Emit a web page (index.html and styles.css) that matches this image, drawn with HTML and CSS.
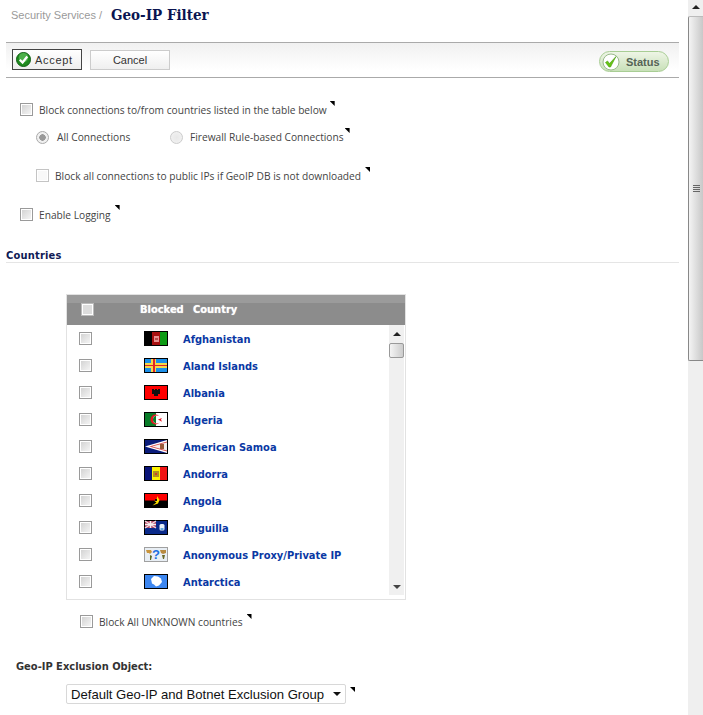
FILE: index.html
```html
<!DOCTYPE html>
<html lang="en">
<head>
<meta charset="utf-8">
<title>Geo-IP Filter</title>
<link rel="stylesheet" href="styles.css">
</head>
<body>
<div class="page">
  <main class="content">
    <header class="title"><span class="crumb">Security Services /</span><h1>Geo-IP Filter</h1></header>
    <div class="toolbar">
      <button class="btn accept" type="button">
        <svg class="accept-ic" width="15" height="15" viewBox="0 0 16 16"><circle cx="8" cy="8" r="7.500" fill="#1f8a1f" stroke="#0d5c12"/><circle cx="8" cy="6" r="5" fill="#4cb04a"/><path d="M4 8.200l3 3 5-6.400" fill="none" stroke="#fff" stroke-width="2.400"/></svg>
        Accept</button>
      <button class="btn cancel" type="button">Cancel</button>
      <div class="status">
        <svg width="18" height="18" viewBox="0 0 18 18"><circle cx="9" cy="9" r="8" fill="#fff" stroke="#9ab98c"/><path d="M3.500 9.500l2-1.500 2 2.500L14 3.500l-5.500 10.500h-1.500z" fill="#66c414" stroke="#4a9a10" stroke-width=".6"/></svg>
        <span>Status</span>
      </div>
    </div>

    <div class="opt opt-a"><input class="cb" type="checkbox"><label>Block connections to/from countries listed in the table below</label><i class="tip tip-a"></i></div>
    <div class="opt opt-b">
      <input class="radio on" type="radio" name="c"><label class="lab-all">All Connections</label>
      <input class="radio off" type="radio" name="c"><label>Firewall Rule-based Connections</label><i class="tip tip-b"></i>
    </div>
    <div class="opt opt-c"><input class="cb pale" type="checkbox"><label>Block all connections to public IPs if GeoIP DB is not downloaded</label><i class="tip tip-c"></i></div>
    <div class="opt opt-d"><input class="cb" type="checkbox"><label>Enable Logging</label><i class="tip tip-d"></i></div>

    <h2 class="section">Countries</h2>

    <section class="table">
      <div class="thead"><input class="cb head-cb" type="checkbox"><span class="th-blocked">Blocked</span><span class="th-country">Country</span></div>
      <div class="tbody">
        <div class="rows">
          <div class="row"><input class="cb" type="checkbox"><svg class="flag" viewBox="0 0 24 15" shape-rendering="crispEdges"><rect width="24" height="15" fill="#000"/><rect x="8" y="1" width="8" height="13" fill="#a81010"/><rect x="16" y="1" width="7" height="13" fill="#0d9b14"/><rect x="10" y="5" width="5" height="6" fill="#e89090"/><rect x="11" y="7" width="3" height="2" fill="#b84a4a"/></svg><a>Afghanistan</a></div>
          <div class="row"><input class="cb" type="checkbox"><svg class="flag" viewBox="0 0 24 15" shape-rendering="crispEdges"><rect width="24" height="15" fill="#000"/><rect x="1" y="1" width="22" height="13" fill="#1c8fe8"/><rect x="7" y="1" width="5" height="13" fill="#f5d848"/><rect x="1" y="5" width="22" height="5" fill="#f5d848"/><rect x="9" y="1" width="2" height="13" fill="#e0242a"/><rect x="1" y="7" width="22" height="1" fill="#e0242a"/></svg><a>Aland Islands</a></div>
          <div class="row"><input class="cb" type="checkbox"><svg class="flag" viewBox="0 0 24 15" shape-rendering="crispEdges"><rect width="24" height="15" fill="#000"/><rect x="1" y="1" width="22" height="13" fill="#ff0000"/><path d="M8 4h2v1h1V4h2v1h1V4h2v5h-2v2h-4V9H8z" fill="#111"/></svg><a>Albania</a></div>
          <div class="row"><input class="cb" type="checkbox"><svg class="flag" viewBox="0 0 24 15"><rect width="24" height="15" fill="#000"/><rect x="1" y="1" width="11" height="13" fill="#087c28"/><rect x="12" y="1" width="11" height="13" fill="#fff"/><circle cx="11.500" cy="7.500" r="5" fill="#e8131f"/><circle cx="13" cy="7.500" r="4" fill="#fff"/><path d="M12 3.630A4 4 0 0 0 12 11.370z" fill="#087c28"/><path d="M14 7.500l4-1.600-1 1.600 1 2.200z" fill="#e8131f"/></svg><a>Algeria</a></div>
          <div class="row"><input class="cb" type="checkbox"><svg class="flag" viewBox="0 0 24 15"><rect width="24" height="15" fill="#000"/><rect x="1" y="1" width="22" height="13" fill="#0a1c7a"/><path d="M1 7.500L23 1v13z" fill="#fff"/><path d="M5 7.500L23 2.400v10.200z" fill="#d85050"/><path d="M8 7.500L23 3.500v8z" fill="#f4eeee"/><rect x="16" y="5" width="4" height="5" fill="#9a5a3a"/></svg><a>American Samoa</a></div>
          <div class="row"><input class="cb" type="checkbox"><svg class="flag" viewBox="0 0 24 15" shape-rendering="crispEdges"><rect width="24" height="15" fill="#000"/><rect x="1" y="1" width="7" height="13" fill="#0a1478"/><rect x="8" y="1" width="8" height="13" fill="#fff200"/><rect x="16" y="1" width="7" height="13" fill="#f01414"/><rect x="9" y="5" width="6" height="6" fill="#b09020"/><rect x="11" y="7" width="2" height="2" fill="#d04020"/></svg><a>Andorra</a></div>
          <div class="row"><input class="cb" type="checkbox"><svg class="flag" viewBox="0 0 24 15"><rect width="24" height="15" fill="#000"/><rect x="1" y="1" width="22" height="6.500" fill="#ff0000"/><path d="M13 3l2.500 4-1.500 3.500-5.500 2 2.500-2 1.500-1-2-1.500 1.500-2 1-.5z" fill="#ffe000"/><rect x="11" y="6" width="2" height="2" fill="#111"/></svg><a>Angola</a></div>
          <div class="row"><input class="cb" type="checkbox"><svg class="flag" viewBox="0 0 24 15"><rect width="24" height="15" fill="#000"/><rect x="1" y="1" width="22" height="13" fill="#0a2a8a"/><rect x="1" y="1" width="11" height="7" fill="#b0435f"/><path d="M1 1l11 7M12 1L1 8" stroke="#f0e0e4" stroke-width="1.400"/><path d="M6.500 1v7M1 4.500h11" stroke="#f8f0f0" stroke-width="1.600"/><rect x="15.500" y="4" width="5" height="6.500" rx="1.500" fill="#e8f2fa"/><rect x="16.500" y="8" width="3" height="2" fill="#62a8e0"/></svg><a>Anguilla</a></div>
          <div class="row"><input class="cb" type="checkbox"><svg class="flag" viewBox="0 0 24 15"><rect width="24" height="15" fill="#a0a0a0"/><rect x="1" y="1" width="22" height="13" fill="#e8eef4"/><path d="M2 3h5l1 2-2 2-1-1-2 0z" fill="#c8943c"/><path d="M6 8l2 1-1 4-1 0z" fill="#5a6a24"/><path d="M16 3h6v3l-3 1-2-1z" fill="#b88a40"/><path d="M18 8h3l-1 4h-1z" fill="#6a6a2a"/><text x="12" y="12" text-anchor="middle" class="q">?</text></svg><a>Anonymous Proxy/Private IP</a></div>
          <div class="row"><input class="cb" type="checkbox"><svg class="flag" viewBox="0 0 24 15"><rect width="24" height="15" fill="#000"/><rect x="1" y="1" width="22" height="13" fill="#3c86f0"/><path d="M7 5l3-3 4 .5 3 2 1 3.500-3 3.500-3 1-2-2-2-1z" fill="#fff"/></svg><a>Antarctica</a></div>
        </div>
        <div class="inner-sb">
          <span class="arrow up"></span>
          <span class="inner-thumb"></span>
          <span class="inner-space"></span>
          <span class="arrow down"></span>
        </div>
      </div>
    </section>

    <div class="opt opt-e"><input class="cb" type="checkbox"><label>Block All UNKNOWN countries</label><i class="tip tip-e"></i></div>

    <h3 class="excl">Geo-IP Exclusion Object:</h3>
    <div class="select-row">
      <div class="select"><span>Default Geo-IP and Botnet Exclusion Group</span><b class="caret"></b></div><i class="tip tip-f"></i>
    </div>
  </main>
  <aside class="sb">
    <span class="sb-up"><span class="arrow up"></span></span>
    <span class="sb-thumb"><span class="grip"></span></span>
  </aside>
</div>
</body>
</html>
```
FILE: styles.css
```css
html, body { margin: 0; padding: 0; height: 715px; overflow: hidden; background: #fff; }
body { font-family: "Liberation Sans", sans-serif; font-size: 11px; color: #333; }
.page { display: flex; width: 703px; height: 715px; }
.content { width: 688px; height: 715px; overflow: hidden; padding-left: 6px; padding-right: 9px; box-sizing: border-box; flex: none; }

.title { display: flex; align-items: center; height: 30px; padding-left: 5px; }
.crumb { color: #9a9a9a; font-size: 11px; width: 100px; flex: none; }
h1 { margin: 0; font-family: "DejaVu Serif Condensed", "DejaVu Serif", serif; font-size: 15px; font-weight: bold; color: #0a1450; white-space: nowrap; }

.toolbar { margin-top: 12px; height: 34px; border-top: 1px solid #aaa; border-bottom: 1px solid #aaa; background: linear-gradient(#f1f1f1, #fff 80%); display: flex; align-items: flex-start; padding-left: 6px; }
.btn { font-family: "Liberation Sans", sans-serif; font-size: 11px; color: #333; padding: 0; box-sizing: border-box; }
.accept { display: flex; align-items: center; gap: 4px; width: 70px; height: 21px; margin-top: 6px; border: 1px solid #444; background: linear-gradient(#fff, #eee); padding-left: 3px; letter-spacing: .7px; }
.cancel { width: 80px; height: 20px; margin: 7px 0 0 8px; border: 1px solid #ccc; background: linear-gradient(#fff, #efefef); }
.status { margin: 8px 10px 0 auto; width: 70px; height: 21px; box-sizing: border-box; border: 1px solid #a8cd94; border-radius: 11px; background: linear-gradient(#eef5e6, #c8e0b8); display: flex; align-items: center; gap: 6px; padding-left: 2px; font: bold 11px "Liberation Sans", sans-serif; color: #556355; }
.status svg { flex: none; }

.opt { display: flex; align-items: center; height: 16px; white-space: nowrap; }
.opt label { font-family: "Open Sans", "Liberation Sans", sans-serif; font-size: 10.2px; color: #444; }
.opt-a { margin-top: 24px; padding-left: 14px; }
.opt-b { margin-top: 11px; padding-left: 30px; }
.opt-c { margin-top: 23px; padding-left: 30px; }
.opt-d { margin-top: 23px; padding-left: 14px; }
.opt-e { margin-top: 14px; padding-left: 74px; }
.lab-all { width: 113px; flex: none; }

.cb { appearance: none; -webkit-appearance: none; width: 13px; height: 13px; margin: -2px 6px 0 0; flex: none; box-sizing: border-box; border: 1px solid #9a9a9a; outline: none; background: linear-gradient(135deg, #d0d0d0, #f8f8f8); box-shadow: inset 0 0 0 1px #fff; }
.cb.pale { border-color: #c4c4c4; background: #f8f8f8; }
.radio { appearance: none; -webkit-appearance: none; width: 13px; height: 13px; margin: 0 8px 0 0; flex: none; box-sizing: border-box; border-radius: 50%; border: 1px solid #ccc; background: radial-gradient(circle, #e8e8e8, #f4f4f4); }
.radio.off { margin-right: 7px; }
.radio.on { background: radial-gradient(circle, #999 0 3px, #f0f0f0 3.500px); border-color: #aaa; }

.tip { display: inline-block; width: 5px; height: 5px; background: #000; clip-path: polygon(0 0, 100% 0, 100% 100%); flex: none; align-self: flex-start; }
.tip-a { margin: -1px 0 0 3px; }
.tip-b { margin: -1px 0 0 1px; }
.tip-c { margin: -1px 0 0 4px; }
.tip-d { margin: -2px 0 0 4px; }
.tip-e { margin: 0 0 0 4px; }

.section { margin: 26px 0 0; height: 13px; line-height: 13px; border-bottom: 1px solid #e5e5e5; font: bold 11px "DejaVu Sans Condensed", "DejaVu Sans", sans-serif; color: #0f1a55; letter-spacing: .2px; }

.table { margin: 31px 0 0 60px; width: 340px; height: 306px; box-sizing: border-box; border: 1px solid #e2e2e2; }
.thead { height: 30px; padding-bottom: 1px; box-sizing: border-box; background: linear-gradient(#9b9b9b 0 8px, #8c8c8c 8px); display: flex; align-items: center; color: #fff; font: bold 11px "DejaVu Sans Condensed", "DejaVu Sans", sans-serif; text-shadow: 0 0 1px #ddd; }
.head-cb { margin: 0 0 0 14px; border-color: #bbb; background: #ddd; }
.th-blocked { margin-left: 46px; width: 53px; flex: none; }
.tbody { display: flex; height: 270px; }
.rows { flex: 1; }
.row { height: 27px; display: flex; align-items: center; }
.row .cb { margin: 0 0 0 12px; }
.flag { width: 24px; height: 15px; margin-left: 52px; flex: none; }
.row a { margin: 2px 0 0 15px; font: bold 11px "DejaVu Sans Condensed", "DejaVu Sans", sans-serif; color: #0a38a4; white-space: nowrap; }
.q { font: bold 13px "Liberation Sans", sans-serif; fill: #2070e0; }

.inner-sb { width: 15px; margin-right: 1px; background: #f0f0f0; display: flex; flex-direction: column; align-items: stretch; }
.inner-thumb { height: 15px; margin-top: 5px; box-sizing: border-box; border: 1px solid #999; border-radius: 2px; background: linear-gradient(90deg, #f4f4f4, #ccc); }
.inner-space { flex: 1; }
.arrow { display: block; width: 0; height: 0; border-left: 4px solid transparent; border-right: 4px solid transparent; margin: 7px auto 2px; }
.arrow.up { border-bottom: 4px solid #222; }
.arrow.down { border-top: 4px solid #444; margin: 2px auto 6px; }

.excl { margin: 30px 0 0 10px; height: 16px; line-height: 16px; font: bold 11px "DejaVu Sans Condensed", "DejaVu Sans", sans-serif; color: #333; }
.select-row { display: flex; margin: 8px 0 0 60px; }
.select { width: 280px; height: 20px; box-sizing: border-box; border: 1px solid #d8d8d8; border-radius: 2px; display: flex; align-items: center; padding-left: 4px; font: 13.1px "Liberation Sans", sans-serif; color: #111; white-space: nowrap; }
.caret { margin-left: auto; margin-right: 4px; width: 0; height: 0; border-left: 4px solid transparent; border-right: 4px solid transparent; border-top: 4px solid #111; }
.tip-f { margin: 3px 0 0 4px; }

.sb { width: 15px; flex: none; height: 715px; background: #efefef; display: flex; flex-direction: column; }
.sb-up { height: 16px; display: block; }
.sb-up .arrow { margin-top: 5px; }
.sb-thumb { height: 345px; box-sizing: border-box; border: 1px solid #888; border-right: 0; border-top-color: #bbb; border-radius: 2px 0 0 2px; background: linear-gradient(90deg, #f4f4f4, #c8c8c8); display: flex; align-items: center; justify-content: center; }
.grip { display: block; width: 7px; height: 8px; background: repeating-linear-gradient(#666 0 1px, transparent 1px 2px); }
```
